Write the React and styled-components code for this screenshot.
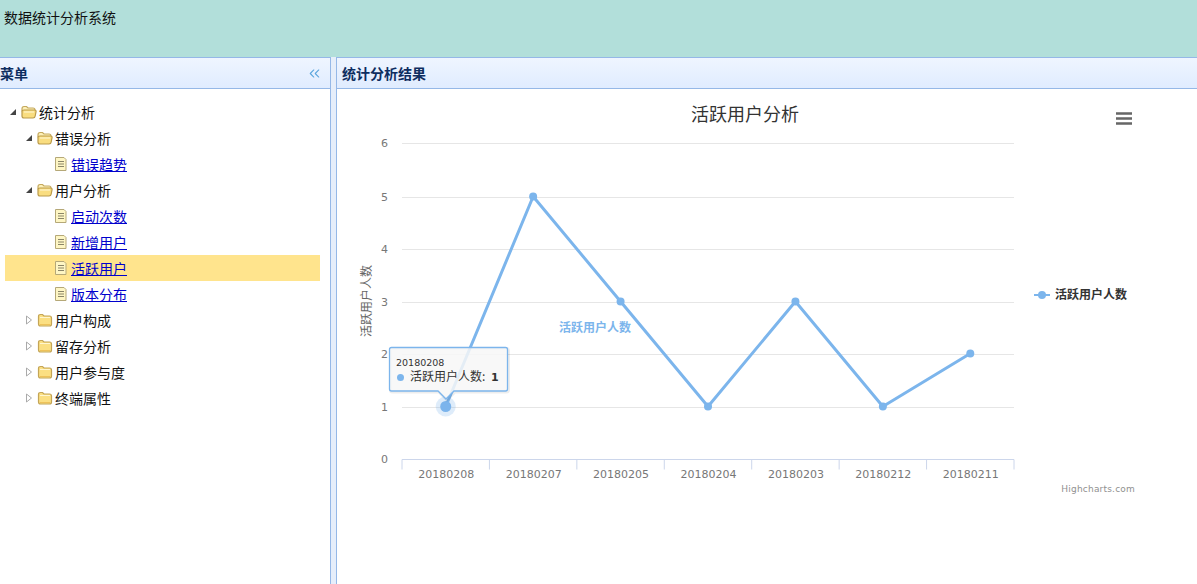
import React from 'react';
import styled, { createGlobalStyle } from 'styled-components';
import { ChevronsLeft } from 'lucide-react';

const cjk = '"Noto Sans CJK SC", "Liberation Sans", sans-serif';

const GlobalStyle = createGlobalStyle`
  html, body, #root {
    height: 100%;
    margin: 0;
    overflow: hidden;
  }

  body {
    background: #fff;
    font-family: ${cjk};
    font-size: 14px;
    color: #111;
  }
`;

const Layout = styled.div`
  display: flex;
  flex-direction: column;
  height: 100%;
`;

const TopBar = styled.header`
  flex: 0 0 57px;
  padding: 7px 4px 0;
  box-sizing: border-box;
  background: #b2dfda;
  line-height: 20px;
`;

const Body = styled.div`
  flex: 1;
  display: flex;
  min-height: 0;
`;

const Panel = styled.section`
  display: flex;
  flex-direction: column;
  box-sizing: border-box;
  flex: ${({ side }) => (side === 'west' ? '0 0 331px' : '1')};
  border-right: ${({ side }) => (side === 'west' ? '1px solid #95b8e7' : 'none')};
  border-left: ${({ side }) => (side === 'west' ? 'none' : '1px solid #95b8e7')};
  min-width: 0;
`;

const Splitter = styled.div`
  flex: 0 0 5px;
  background: #e6eefa;
`;

const PanelHeader = styled.div`
  flex: 0 0 32px;
  display: flex;
  align-items: center;
  justify-content: space-between;
  box-sizing: border-box;
  padding: 0 ${({ side }) => (side === 'west' ? '7px 0 0' : '0 0 5px')};
  background: linear-gradient(to bottom, #eff5ff, #e0ecff);
  border-top: 1px solid #95b8e7;
  border-bottom: 1px solid #95b8e7;
`;

const PanelTitle = styled.h2`
  margin: 0;
  font-size: 14px;
  font-weight: 700;
  color: #0e2d5f;
`;

const Tree = styled.ul`
  list-style: none;
  margin: 0;
  padding: 10px 10px 0 5px;
`;

const Row = styled.li`
  display: flex;
  align-items: center;
  height: 26px;
  padding-left: ${({ level }) => level * 16}px;
  background: ${({ selected }) => (selected ? '#ffe48d' : 'transparent')};
`;

const Hit = styled.span`
  flex: 0 0 16px;
  height: 16px;
  display: flex;
  align-items: center;
  justify-content: center;
`;

const Icon = styled.svg`
  flex: 0 0 16px;
  width: 16px;
  height: 16px;
`;

const Label = styled.span`
  margin-left: 2px;
  line-height: 20px;
  white-space: nowrap;
`;

const Link = styled.a`
  margin-left: 2px;
  line-height: 20px;
  color: #0000cc;
  text-decoration: underline;
`;

const Chart = styled.svg`
  display: block;
  flex: 1;
  width: 100%;
  min-height: 0;
`;

const ChartText = styled.text`
  font-family: ${({ latin }) => (latin ? '"DejaVu Sans", sans-serif' : cjk)};
  font-size: ${({ size }) => size}px;
  font-weight: ${({ bold }) => (bold ? 700 : 400)};
  fill: ${({ color }) => color};
  text-anchor: ${({ anchor }) => anchor || 'start'};
`;

const Arrow = ({ open }) =>
  open ? (
    <svg width="8" height="8" viewBox="0 0 8 8">
      <path d="M7 1v6H1z" fill="#444" />
    </svg>
  ) : (
    <svg width="8" height="10" viewBox="0 0 8 10">
      <path d="M1.500 1l5 4-5 4z" fill="#fff" stroke="#aaa" />
    </svg>
  );

const FolderOpen = () => (
  <Icon viewBox="0 0 16 16">
    <path d="M1 5Q1 2.500 3 2.500h2.500L7 4h5q2 0 2 2v1H1z" fill="#fdf0b8" stroke="#c5a95e" strokeWidth="1.200" />
    <path d="M1 12V7.500Q1 6 3 6h10.500q2 0 1.500 2l-.8 4q-.3 2-2.200 2H3Q1 14 1 12z" fill="#f9dd80" stroke="#bb9b4a" strokeWidth="1.200" />
    <path d="M3 8h10" stroke="#fff8d8" />
  </Icon>
);

const FolderClosed = () => (
  <Icon viewBox="0 0 16 16">
    <path d="M1.500 12V4.500Q1.500 2.500 3.500 2.500h2L7 4h5.500q2 0 2 2v6q0 2-2 2h-9q-2 0-2-2z" fill="#fbdf82" stroke="#c4a557" strokeWidth="1.200" />
    <path d="M3 5.500h10" stroke="#fff6cf" />
    <path d="M3 12.500h10" stroke="#eec25a" />
  </Icon>
);

const FileIcon = () => (
  <Icon viewBox="0 0 16 16">
    <path d="M2.500 1.500h8.500l2 2v11h-10.500z" fill="#fef6c4" stroke="#b5a878" />
    <path d="M5 5.500h6M5 8h6M5 10.500h6" stroke="#8a8568" />
  </Icon>
);

const treeRows = [
  { title: '统计分析', level: 0, type: 'open' },
  { title: '错误分析', level: 1, type: 'open' },
  { title: '错误趋势', level: 2, type: 'file' },
  { title: '用户分析', level: 1, type: 'open' },
  { title: '启动次数', level: 2, type: 'file' },
  { title: '新增用户', level: 2, type: 'file' },
  { title: '活跃用户', level: 2, type: 'file', selected: true },
  { title: '版本分布', level: 2, type: 'file' },
  { title: '用户构成', level: 1, type: 'closed' },
  { title: '留存分析', level: 1, type: 'closed' },
  { title: '用户参与度', level: 1, type: 'closed' },
  { title: '终端属性', level: 1, type: 'closed' },
];

const TreeRow = ({ title, level, type, selected }) => (
  <Row level={level} selected={selected}>
    <Hit>{type !== 'file' && <Arrow open={type === 'open'} />}</Hit>
    {type === 'open' && <FolderOpen />}
    {type === 'closed' && <FolderClosed />}
    {type === 'file' && <FileIcon />}
    {type === 'file' ? <Link href="#">{title}</Link> : <Label>{title}</Label>}
  </Row>
);

const BLUE = '#7cb5ec';
const plot = { left: 402, right: 1014 };
// pixel rows of the value axis, 0 to 6
const tickY = [459.5, 407.5, 354.5, 302.5, 249.5, 197.5, 143.5];
const categories = ['20180208', '20180207', '20180205', '20180204', '20180203', '20180212', '20180211'];
const values = [1, 5, 3, 1, 3, 1, 2];
const step = (plot.right - plot.left) / categories.length;
const xOf = (i) => plot.left + step * (i + 0.5);
const linePoints = values.map((v, i) => `${xOf(i)},${tickY[v] - 1}`).join(' ');

const tooltipPath = 'M391.500 347.500H505.500Q507.500 347.500 507.500 349.500V389Q507.500 391 505.500 391H454L446 399L438 391H391.500Q389.500 391 389.500 389V349.500Q389.500 347.500 391.500 347.500Z';

const ActivityChart = () => (
  <Chart viewBox="337 89 860 495" preserveAspectRatio="xMinYMin meet">
    <ChartText x={745} y={121} size={18} color="#333" anchor="middle">活跃用户分析</ChartText>

    <path d="M1116 113.500h16M1116 118.500h16M1116 123.500h16" stroke="#666" strokeWidth="2.600" />

    {tickY.map((y, v) => (
      <g key={v}>
        {v > 0 && <line x1={plot.left} x2={plot.right} y1={y} y2={y} stroke="#e6e6e6" />}
        <ChartText latin x={388} y={y + 3.500} size={11} color="#777" anchor="end">{v}</ChartText>
      </g>
    ))}

    <line x1={plot.left} x2={plot.right} y1={459.500} y2={459.500} stroke="#ccd6eb" />
    {categories.map((c, i) => (
      <g key={c}>
        <line x1={plot.left + step * i} x2={plot.left + step * i} y1={459.500} y2={469.500} stroke="#ccd6eb" />
        <ChartText latin x={xOf(i) + 0.500} y={478} size={11} color="#777" anchor="middle">{c}</ChartText>
      </g>
    ))}
    <line x1={plot.right} x2={plot.right} y1={459.500} y2={469.500} stroke="#ccd6eb" />

    <ChartText x={0} y={0} size={12} color="#666" anchor="middle" transform="translate(371 301) rotate(-90)">活跃用户人数</ChartText>

    <polyline points={linePoints} fill="none" stroke={BLUE} strokeWidth="3" strokeLinejoin="round" />
    {values.map((v, i) => (
      <circle key={i} cx={xOf(i)} cy={tickY[v] - 1} r={i === 0 ? 5.500 : 4} fill={BLUE} />
    ))}
    <circle cx={xOf(0)} cy={tickY[1] - 1} r={10} fill={BLUE} opacity="0.25" />

    <ChartText x={595} y={332} size={12} bold color={BLUE} anchor="middle">活跃用户人数</ChartText>

    <path d={tooltipPath} fill="none" stroke="#000" strokeOpacity="0.07" strokeWidth="3" transform="translate(1 1)" />
    <path d={tooltipPath} fill="#f7f7f7" fillOpacity="0.85" stroke={BLUE} strokeWidth="1.300" />
    <ChartText latin x={396} y={366} size={9.500} color="#333">20180208</ChartText>
    <circle cx={400.500} cy={377.500} r={3.500} fill={BLUE} />
    <ChartText x={410} y={381} size={12} color="#333">活跃用户人数:</ChartText>
    <ChartText latin x={491} y={381} size={11} bold color="#333">1</ChartText>

    <line x1={1034} x2={1050} y1={295} y2={295} stroke={BLUE} strokeWidth="2" />
    <circle cx={1042} cy={295} r={4} fill={BLUE} />
    <ChartText x={1055} y={299} size={12} bold color="#333">活跃用户人数</ChartText>

    <ChartText latin x={1135} y={492} size={9} color="#909090" anchor="end" letterSpacing="0.2">Highcharts.com</ChartText>
  </Chart>
);

export default function App() {
  return (
    <Layout>
      <GlobalStyle />
      <TopBar>数据统计分析系统</TopBar>
      <Body>
        <Panel side="west">
          <PanelHeader side="west">
            <PanelTitle>菜单</PanelTitle>
            <ChevronsLeft size={17} color="#5aa5dd" strokeWidth={1.500} />
          </PanelHeader>
          <Tree>
            {treeRows.map((row) => (
              <TreeRow key={row.title} {...row} />
            ))}
          </Tree>
        </Panel>
        <Splitter />
        <Panel side="center">
          <PanelHeader side="center">
            <PanelTitle>统计分析结果</PanelTitle>
          </PanelHeader>
          <ActivityChart />
        </Panel>
      </Body>
    </Layout>
  );
}
